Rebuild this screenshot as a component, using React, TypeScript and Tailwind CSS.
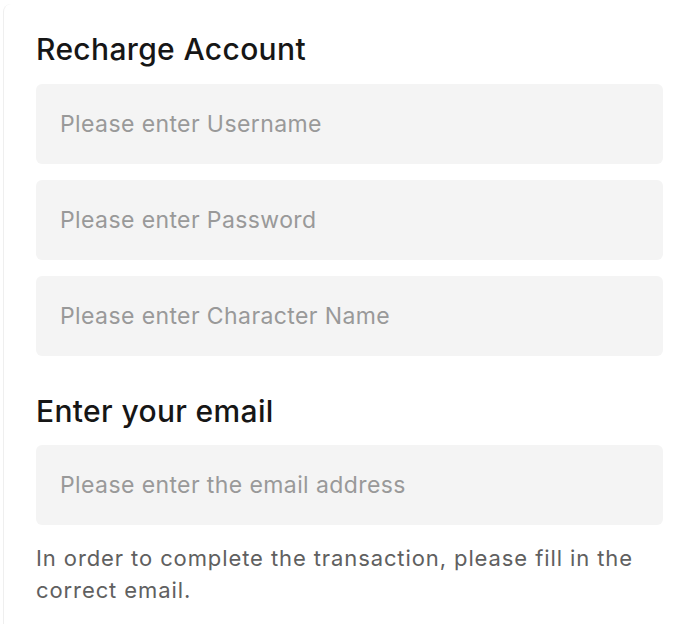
import React from "react";

const fields = [
  "Please enter Username",
  "Please enter Password",
  "Please enter Character Name",
];

function Field({ placeholder }: { placeholder: string }) {
  return (
    <input
      type="text"
      placeholder={placeholder}
      className="w-full h-[80px] rounded-md bg-[#f4f4f4] px-6 text-[23px] tracking-[0.4px] text-[#222] placeholder:text-[#999] outline-none"
    />
  );
}

export default function App() {
  return (
    <div className="w-[690px] h-[624px] overflow-hidden bg-white font-['Inter','Liberation_Sans',sans-serif]">
      <div className="ml-[3px] mt-[4px] h-[700px] rounded-tl-lg border-l border-[#efefef] pl-[32px] pr-[27px] pt-[25px]">
        <h1 className="text-[30px] leading-[40px] tracking-[0.35px] font-medium text-[#161616]">Recharge Account</h1>
        <div className="mt-[15px] flex flex-col gap-4">
          {fields.map((f) => (
            <Field key={f} placeholder={f} />
          ))}
        </div>

        <h2 className="mt-[35px] text-[30px] leading-[40px] tracking-[0.35px] font-medium text-[#161616]">Enter your email</h2>
        <div className="mt-[14px]">
          <Field placeholder="Please enter the email address" />
        </div>
        <p className="mt-[17px] text-[22px] leading-[32px] tracking-[0.9px] text-[#606060]">
          In order to complete the transaction, please fill in the correct email.
        </p>
      </div>
    </div>
  );
}
